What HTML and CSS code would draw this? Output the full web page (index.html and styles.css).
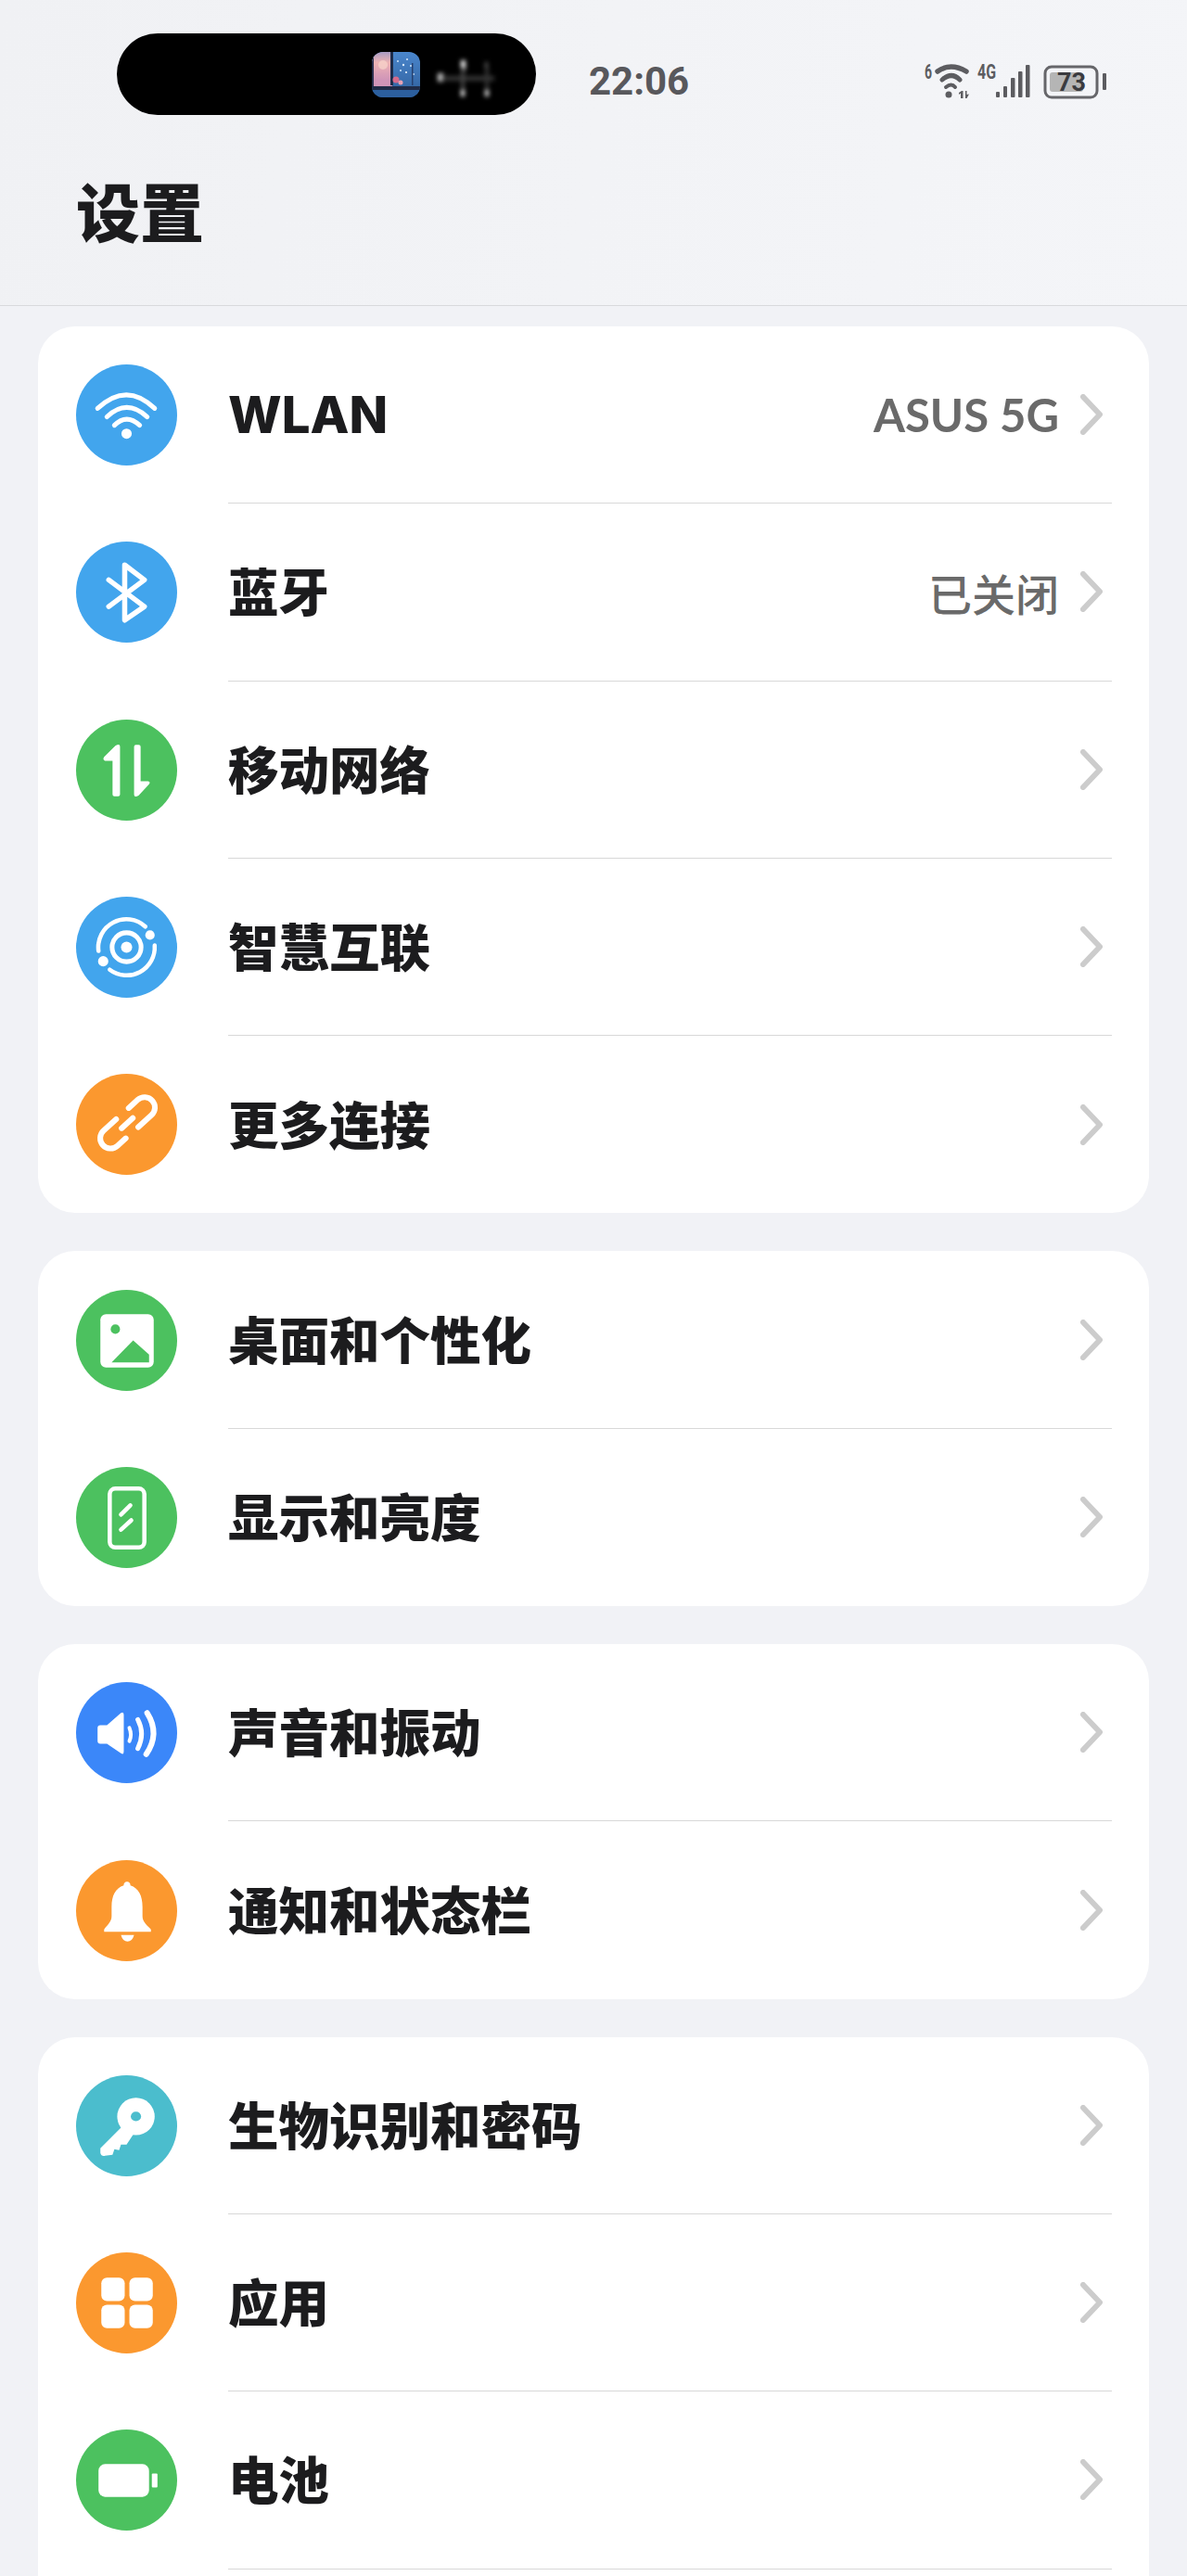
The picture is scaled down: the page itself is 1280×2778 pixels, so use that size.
FILE: index.html
```html
<!DOCTYPE html>
<html lang="zh-CN">
<head>
    <meta charset="UTF-8">
    <meta name="viewport" content="width=device-width, initial-scale=1.0">
    <title>设置</title>
    <link rel="stylesheet" href="styles.css">
</head>
<body>
    <header class="header">
        <div class="status-bar">
            <div class="island">
                <svg class="island-thumb" viewBox="0 0 52 49">
                    <defs>
                        <linearGradient id="sky" x1="0" y1="0" x2="0" y2="1">
                            <stop offset="0" stop-color="#a99cc4"/>
                            <stop offset=".3" stop-color="#eeb3b4"/>
                            <stop offset=".8" stop-color="#cf94b8"/>
                        </linearGradient>
                        <linearGradient id="night" x1="0" y1="0" x2="0" y2="1">
                            <stop offset="0" stop-color="#4a86cc"/>
                            <stop offset="1" stop-color="#2f5f9c"/>
                        </linearGradient>
                        <clipPath id="thumbClip"><rect width="52" height="49" rx="12"/></clipPath>
                    </defs>
                    <g clip-path="url(#thumbClip)">
                        <rect width="52" height="49" fill="url(#night)"/>
                        <rect width="22" height="38" fill="url(#sky)"/>
                        <rect x="20" y="0" width="3" height="36" fill="#1d2c4a"/>
                        <rect x="0" y="0" width="2" height="38" fill="#2a2f4d"/>
                        <circle cx="12" cy="14" r="5" fill="#f8d6cc" opacity=".7"/>
                        <circle cx="28" cy="10" r="1" fill="#cfe4fa"/>
                        <circle cx="34" cy="14" r="1.2" fill="#dbeafc"/>
                        <circle cx="38" cy="8" r="1" fill="#dbeafc"/>
                        <circle cx="42" cy="15" r="1" fill="#cfe4fa"/>
                        <circle cx="31" cy="20" r="1" fill="#cfe4fa"/>
                        <circle cx="37" cy="22" r="1.1" fill="#e6f0fc"/>
                        <circle cx="45" cy="24" r="1" fill="#cfe4fa"/>
                        <rect x="43" y="12" width="1.500" height="24" fill="#26406e"/>
                        <circle cx="26" cy="30" r="3.500" fill="#d46a8c"/>
                        <circle cx="31" cy="33" r="2.500" fill="#e7a1b4"/>
                        <rect x="0" y="37" width="52" height="4" fill="#1f2b48"/>
                        <rect x="0" y="41" width="52" height="8" fill="#2c5f9e"/>
                    </g>
                </svg>
                <svg class="island-blur" viewBox="0 0 80 50">
                    <rect x="26" y="10" width="5" height="11" fill="#fff"/>
                    <rect x="26" y="38" width="4" height="11" fill="#fff"/>
                    <rect x="52" y="38" width="4" height="11" fill="#eee"/>
                    <rect x="52" y="12" width="3" height="6" fill="#666"/>
                    <rect x="1" y="24" width="6" height="9" fill="#ccc"/>
                    <rect x="6" y="27" width="56" height="5" fill="#383838"/>
                    <rect x="26" y="18" width="4" height="24" fill="#444"/>
                    <rect x="52" y="18" width="4" height="24" fill="#333"/>
                </svg>
            </div>
            <span class="clock">22:06</span>
            <svg class="status-icons" viewBox="0 0 210 50">
                <text class="status-tag" x="7" y="23" textLength="8" lengthAdjust="spacingAndGlyphs">6</text>
                <g class="status-line">
                    <path d="M21 15Q35 5 52 15" stroke-width="5.500"/>
                    <path d="M26 24Q36 15 45 24" stroke-width="5"/>
                    <path d="M30 32Q36 27 40 32" stroke-width="4"/>
                </g>
                <circle class="status-fill" cx="33" cy="40" r="3.500"/>
                <path class="status-fill" d="M46 44V38.500L44 40V38L47 36H48.500V44ZM51 36H52.500V40L55 39.500 52.500 44H51Z"/>
                <text class="status-tag" x="64" y="23" textLength="20" lengthAdjust="spacingAndGlyphs">4G</text>
                <rect class="status-fill" x="84" y="37" width="4" height="6" rx="1"/>
                <rect class="status-fill" x="92" y="31" width="4" height="12" rx="1"/>
                <rect class="status-fill" x="100" y="22" width="4.500" height="21" rx="1"/>
                <rect class="status-fill" x="108" y="15" width="4.500" height="28" rx="1"/>
                <rect class="status-fill" x="116" y="8" width="4.500" height="35" rx="1"/>
                <rect x="137" y="10" width="56" height="33" rx="7" fill="none" stroke="#66666a" stroke-width="3"/>
                <rect x="142" y="16" width="36" height="21" rx="3" fill="#b5b5b5"/>
                <text class="status-level" x="150" y="36">73</text>
                <rect class="status-fill" x="199" y="17" width="4" height="18" rx="1"/>
            </svg>
        </div>
        <h1 class="page-title">设置</h1>
    </header>

    <main class="settings">
        <section class="card">
            <div class="row">
                <svg class="icon blue" viewBox="0 0 108 108">
                    <g class="glyph-line">
                        <path d="M23 47Q54 18 84 47" stroke-width="5"/>
                        <path d="M33 56Q54 36 76 56" stroke-width="5"/>
                        <path d="M41 65Q54 52 68 65" stroke-width="5"/>
                    </g>
                    <circle class="glyph" cx="54" cy="74" r="5.500"/>
                </svg>
                <div class="row-body">
                    <span class="row-label row-label-latin">WLAN</span>
                    <span class="row-value">ASUS 5G</span>
                    <svg class="chevron" viewBox="0 0 24 44"><path d="M3 3L21 22L3 41"/></svg>
                </div>
            </div>
            <div class="row">
                <svg class="icon blue" viewBox="0 0 108 108">
                    <path class="glyph-line" stroke-width="5.500" d="M35 41L73 69.500L52 84V25L73 41L35 69.500"/>
                </svg>
                <div class="row-body">
                    <span class="row-label">蓝牙</span>
                    <span class="row-value row-value-zh">已关闭</span>
                    <svg class="chevron" viewBox="0 0 24 44"><path d="M3 3L21 22L3 41"/></svg>
                </div>
            </div>
            <div class="row">
                <svg class="icon green" viewBox="0 0 108 108">
                    <path class="glyph" d="M47 29V80Q47 82 45 82H41Q39 82 39 80V44H31Q28 43 30 40L42 28Q47 25 47 29Z"/>
                    <path class="glyph" d="M62 29Q62 27 64 27H67Q69 27 69 29V66H77Q80 67 78 69L67 81Q62 84 62 80Z"/>
                </svg>
                <div class="row-body">
                    <span class="row-label">移动网络</span>
                    <svg class="chevron" viewBox="0 0 24 44"><path d="M3 3L21 22L3 41"/></svg>
                </div>
            </div>
            <div class="row">
                <svg class="icon blue" viewBox="0 0 108 108">
                    <g class="glyph-line">
                        <path d="M24 58A30 30 0 0 1 74 32" stroke-width="4.500"/>
                        <path d="M84 52A30 30 0 0 1 36 78" stroke-width="4.500"/>
                        <circle cx="54" cy="54" r="15.500" stroke-width="5"/>
                    </g>
                    <circle class="glyph" cx="54" cy="54" r="6"/>
                    <circle class="glyph" cx="79" cy="41" r="5"/>
                    <circle class="glyph" cx="29" cy="69" r="5.500"/>
                </svg>
                <div class="row-body">
                    <span class="row-label">智慧互联</span>
                    <svg class="chevron" viewBox="0 0 24 44"><path d="M3 3L21 22L3 41"/></svg>
                </div>
            </div>
            <div class="row">
                <svg class="icon orange" viewBox="0 0 108 108">
                    <g class="glyph-line" stroke-width="6" transform="rotate(-42 54 52)">
                        <path d="M48 42H30A11 11 0 0 0 30 64H42"/>
                        <path d="M60 64H79A11 11 0 0 0 79 42H66"/>
                        <path d="M46 53H62"/>
                    </g>
                </svg>
                <div class="row-body">
                    <span class="row-label">更多连接</span>
                    <svg class="chevron" viewBox="0 0 24 44"><path d="M3 3L21 22L3 41"/></svg>
                </div>
            </div>
        </section>

        <section class="card">
            <div class="row">
                <svg class="icon green" viewBox="0 0 108 108">
                    <rect class="glyph" x="26" y="26" width="57" height="57" rx="6"/>
                    <circle class="cut-green" cx="42" cy="42" r="5"/>
                    <path class="cut-green" d="M38 77.500L61 54L78 69V77.500Z"/>
                </svg>
                <div class="row-body">
                    <span class="row-label">桌面和个性化</span>
                    <svg class="chevron" viewBox="0 0 24 44"><path d="M3 3L21 22L3 41"/></svg>
                </div>
            </div>
            <div class="row">
                <svg class="icon green" viewBox="0 0 108 108">
                    <g class="glyph-line" stroke-width="4.500">
                        <rect x="36" y="23" width="37" height="63" rx="6"/>
                        <path d="M58 41L48 51"/>
                        <path d="M59 57L48 67"/>
                    </g>
                </svg>
                <div class="row-body">
                    <span class="row-label">显示和亮度</span>
                    <svg class="chevron" viewBox="0 0 24 44"><path d="M3 3L21 22L3 41"/></svg>
                </div>
            </div>
        </section>

        <section class="card">
            <div class="row">
                <svg class="icon sky" viewBox="0 0 108 108">
                    <path class="glyph" d="M26 46H33L48 33Q51 31 51 35V74Q51 78 48 76L33 66H26Q23 66 23 63V49Q23 46 26 46Z"/>
                    <g class="glyph-line">
                        <path d="M57 49Q60 56 57 63" stroke-width="4"/>
                        <path d="M66 40Q74 55 66 71" stroke-width="5"/>
                        <path d="M76 33Q90 55 75 77" stroke-width="6"/>
                    </g>
                </svg>
                <div class="row-body">
                    <span class="row-label">声音和振动</span>
                    <svg class="chevron" viewBox="0 0 24 44"><path d="M3 3L21 22L3 41"/></svg>
                </div>
            </div>
            <div class="row">
                <svg class="icon orange" viewBox="0 0 108 108">
                    <path class="glyph" d="M54.500 23a3.500 3.500 0 0 1 3.500 4C67 30 71 38 71 50V60C71 66 76 70 80 74V76.500H30V74C33 70 38 66 38 60V50C38 38 42 30 51 27a3.500 3.500 0 0 1 3.500-4Z"/>
                    <path class="glyph" d="M48 80H62Q60 87 55 87Q50 87 48 80Z"/>
                </svg>
                <div class="row-body">
                    <span class="row-label">通知和状态栏</span>
                    <svg class="chevron" viewBox="0 0 24 44"><path d="M3 3L21 22L3 41"/></svg>
                </div>
            </div>
        </section>

        <section class="card card-cut">
            <div class="row">
                <svg class="icon teal" viewBox="0 0 108 108">
                    <circle class="glyph" cx="64" cy="44" r="20"/>
                    <path class="glyph" d="M50 54L26 78V83Q27 87 31 86L39 85L41 79L46 80L48 74L54 74L62 62Z"/>
                    <ellipse class="cut-teal" cx="64" cy="44" rx="5.500" ry="5"/>
                </svg>
                <div class="row-body">
                    <span class="row-label">生物识别和密码</span>
                    <svg class="chevron" viewBox="0 0 24 44"><path d="M3 3L21 22L3 41"/></svg>
                </div>
            </div>
            <div class="row">
                <svg class="icon orange" viewBox="0 0 108 108">
                    <rect class="glyph" x="27" y="27" width="25" height="25" rx="6"/>
                    <rect class="glyph" x="57" y="27" width="25" height="25" rx="6"/>
                    <rect class="glyph" x="27" y="56" width="25" height="25" rx="6"/>
                    <rect class="glyph" x="57" y="56" width="25" height="25" rx="6"/>
                </svg>
                <div class="row-body">
                    <span class="row-label">应用</span>
                    <svg class="chevron" viewBox="0 0 24 44"><path d="M3 3L21 22L3 41"/></svg>
                </div>
            </div>
            <div class="row">
                <svg class="icon green" viewBox="0 0 108 108">
                    <rect class="glyph" x="24" y="37" width="54" height="35" rx="7"/>
                    <rect class="glyph" x="81" y="47" width="6" height="15" rx="1"/>
                </svg>
                <div class="row-body row-body-line">
                    <span class="row-label">电池</span>
                    <svg class="chevron" viewBox="0 0 24 44"><path d="M3 3L21 22L3 41"/></svg>
                </div>
            </div>
        </section>
    </main>
</body>
</html>
```

FILE: styles.css
```css
/* General Reset and Font */
* {
    margin: 0;
    padding: 0;
    box-sizing: border-box;
}

html, body {
    height: 100%;
    overflow: hidden;
}

body {
    font-family: "Noto Sans", "Noto Sans CJK SC", sans-serif;
    background: #f1f2f6;
}

/* Header */
.header {
    height: 330px;
    background: linear-gradient(100deg, #f0f1f4, #f4f5f8);
    border-bottom: 1px solid #d8d9dc;
}

.status-bar {
    display: flex;
    align-items: flex-start;
    height: 124px;
    padding: 36px 0 0 126px;
}

.island {
    display: flex;
    align-items: center;
    width: 452px;
    height: 88px;
    padding-left: 275px;
    background: #000;
    border-radius: 44px;
}

.island-thumb {
    width: 52px;
    height: 49px;
}

.island-blur {
    width: 80px;
    height: 50px;
    margin-left: 18px;
    filter: blur(2.5px);
}

.clock {
    margin: 27px 0 0 57px;
    font-family: Roboto, sans-serif;
    font-size: 42px;
    font-weight: 700;
    line-height: 50px;
    color: #58585c;
}

.status-icons {
    width: 210px;
    height: 50px;
    margin: 26px 0 0 247px;
}

.status-tag {
    font-family: Roboto, sans-serif;
    font-size: 22px;
    font-weight: 700;
    fill: #5c5c60;
}

.status-level {
    font-family: Roboto, sans-serif;
    font-size: 27px;
    font-weight: 700;
    fill: #3b3b3f;
}

.status-fill {
    fill: #5c5c60;
}

.status-line {
    fill: none;
    stroke: #5c5c60;
    stroke-linecap: round;
}

.page-title {
    padding: 62px 0 0 82px;
    font-family: "Noto Sans CJK SC", sans-serif;
    font-size: 69px;
    font-weight: 900;
    line-height: 80px;
    color: #1c1c1e;
}

/* Cards */
.settings {
    display: grid;
    gap: 41px;
    padding: 22px 41px 0;
}

.card {
    background: #fff;
    border-radius: 40px;
}

/* last card runs off the bottom of the screen */
.card-cut {
    padding-bottom: 8px;
    border-radius: 40px 40px 0 0;
}

.row {
    display: flex;
    height: 191.3px;
    padding-left: 41px;
}

.row-body {
    display: flex;
    flex: 1;
    align-items: center;
    margin: 0 40px 0 55px;
    padding-right: 10px;
    border-bottom: 1px solid #d8d8d8;
}

.card > .row:last-child .row-body {
    border-bottom: none;
}

.card > .row:last-child .row-body-line {
    border-bottom: 1px solid #d8d8d8;
}

.row-label {
    flex: 1;
    padding-bottom: 5px;
    font-family: Inter, "Noto Sans CJK SC", sans-serif;
    font-size: 54.5px;
    font-weight: 800;
    color: #1c1c1e;
}

.row-label-latin {
    padding-bottom: 0;
}

.row-value {
    margin-right: 23px;
    font-family: Lato, sans-serif;
    font-size: 49px;
    font-weight: 700;
    color: #6a6a6a;
}

.row-value-zh {
    font-family: "Noto Sans CJK SC", sans-serif;
    font-size: 47px;
    font-weight: 500;
}

.chevron {
    width: 24px;
    height: 44px;
    fill: none;
    stroke: #ccc;
    stroke-width: 6;
    stroke-linecap: round;
    stroke-linejoin: round;
}

/* Round setting icons */
.icon {
    flex: none;
    align-self: center;
    width: 109px;
    height: 109px;
    border-radius: 50%;
}

.blue { background: #42a5ed; }
.green { background: #4cc15f; }
.orange { background: #fb982f; }
.sky { background: #3b87f9; }
.teal { background: #4bbdcd; }

.glyph {
    fill: #fff;
}

.glyph-line {
    fill: none;
    stroke: #fff;
    stroke-linecap: round;
    stroke-linejoin: round;
}

.cut-green { fill: #4cc15f; }
.cut-teal { fill: #4bbdcd; }
```
